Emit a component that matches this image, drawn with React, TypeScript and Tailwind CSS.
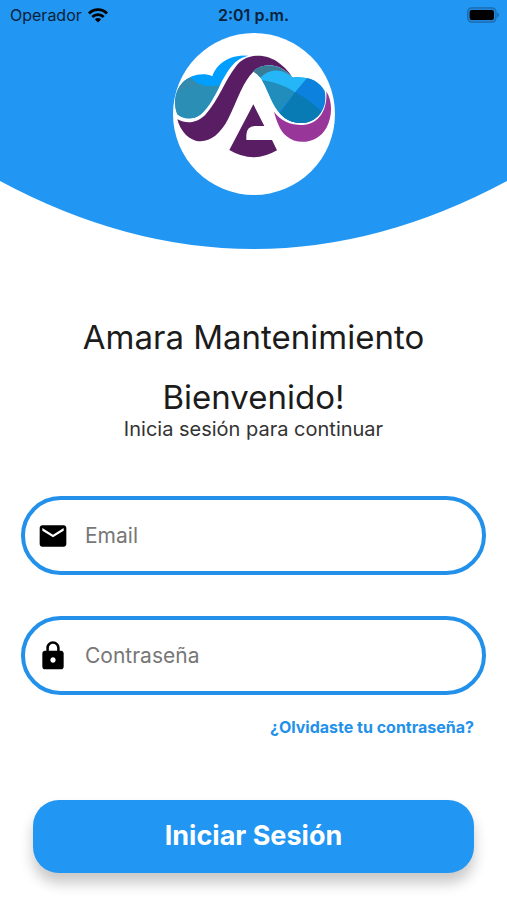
import type { ReactNode } from "react";

function StatusBar() {
  return (
    <div className="grid grid-cols-3 items-center px-2 pt-[3px] text-base leading-6 text-[#0a2238]">
      <div className="flex items-center gap-1.5 pl-0.5">
        <span>Operador</span>
        <svg viewBox="0 0 20 15" className="h-[15px] w-5" aria-hidden="true">
          <g fill="none" stroke="#000" strokeWidth="2.8">
            <path d="M1 5.4 C6 .4 14 .4 19 5.4" />
            <path d="M4.3 9 C7.5 5.8 12.5 5.8 15.7 9" />
          </g>
          <path d="M6.8 11.3 C8.7 9.6 11.3 9.6 13.2 11.3 L10 14.6Z" fill="#000" />
        </svg>
      </div>
      <time className="text-center font-semibold">2:01 p.m.</time>
      <svg viewBox="0 0 33 16" className="h-4 w-[33px] justify-self-end" aria-label="Batería" role="img">
        <rect x="1.6" y=".8" width="28.4" height="14.4" rx="4.2" fill="#2287db" stroke="#1c6bac" strokeWidth="1.2" />
        <rect x="3.6" y="3" width="24.4" height="10" rx="2.2" fill="#000" />
        <path d="M31.2 5.5 Q33 6 33 8 T31.2 10.5Z" fill="#1c6bac" />
      </svg>
    </div>
  );
}

function Logo() {
  return (
    <svg viewBox="40 24 486 486" className="size-[162px]" role="img" aria-label="Amara">
      <defs>
        <clipPath id="leftCloud">
          <path d="M53 268 C41 238 44 198 70 172 C92 150 130 141 158 154 C171 116 209 88 266 92 C223 101 205 137 187 168 C169 205 150 246 122 269 C98 286 70 283 53 268Z" />
        </clipPath>
        <clipPath id="rightCloud">
          <path d="M281 140 C304 116 354 108 398 157 C438 151 480 165 495 199 C505 244 477 293 425 294 C385 295 359 270 340 235 C323 202 309 152 281 140Z" />
        </clipPath>
      </defs>
      <circle cx="283" cy="267" r="243" fill="#fff" />
      <g clipPath="url(#leftCloud)">
        <rect x="40" y="85" width="230" height="205" fill="#009fff" />
        <path d="M40 160 L95 160 C115 180 138 187 180 181 L180 290 L40 290Z" fill="#2b8eb4" />
        <path d="M40 160 L95 160 Q105 176 123 183 Q80 183 40 208Z" fill="#348bad" />
      </g>
      <path
        d="M53 283 C84 300 116 292 139 267 C178 223 197 164 228 125 C259 83 319 84 358 114 C376 127 391 144 397 157 C358 108 304 116 281 140 C251 168 233 225 205 283 C178 334 145 355 108 347 C79 338 61 313 53 283Z"
        fill="#591d63"
      />
      <g clipPath="url(#rightCloud)">
        <rect x="275" y="105" width="235" height="195" fill="#25b6f8" />
        <path d="M275 105 H400 V158 C372 132 333 126 302 158 L281 145Z" fill="#397c96" />
        <path d="M300 165 C340 168 379 183 406 202 L372 250 L430 300 L320 300Z" fill="#218dbc" />
        <path d="M450 150 H510 V300 H330 L406 202Z" fill="#0c81de" />
        <path d="M406 202 C440 218 465 241 490 265 V300 H330 L372 250Z" fill="#087ab4" />
      </g>
      <path
        d="M343 260 C361 286 392 300 427 300 C478 299 504 255 500 199 C519 229 519 275 500 309 C473 356 413 362 380 333 C359 315 350 285 343 260Z"
        fill="#993699"
      />
      <path
        d="M281 238 L314 303 H285 Q261 304 260 330 V345 H337 L352 376 Q281 418 209 375Z"
        fill="#591d63"
      />
    </svg>
  );
}

function MailIcon() {
  return (
    <svg viewBox="0 0 24 24" className="size-8" fill="#000" aria-hidden="true">
      <path d="M20 4H4c-1.1 0-1.99.9-1.99 2L2 18c0 1.1.9 2 2 2h16c1.1 0 2-.9 2-2V6c0-1.1-.9-2-2-2zm0 4l-8 5-8-5V6l8 5 8-5v2z" />
    </svg>
  );
}

function LockIcon() {
  return (
    <svg viewBox="0 0 24 24" className="size-8" fill="#000" aria-hidden="true">
      <path d="M18 8h-1V6c0-2.76-2.24-5-5-5S7 3.24 7 6v2H6c-1.1 0-2 .9-2 2v10c0 1.1.9 2 2 2h12c1.1 0 2-.9 2-2V10c0-1.1-.9-2-2-2zm-6 9c-1.1 0-2-.9-2-2s.9-2 2-2 2 .9 2 2-.9 2-2 2zm3.1-9H8.9V6c0-1.71 1.39-3.1 3.1-3.1s3.1 1.39 3.1 3.1v2z" />
    </svg>
  );
}

function Field({ id, type, label, icon }: { id: string; type: string; label: string; icon: ReactNode }) {
  return (
    <div className="flex h-[79px] items-center gap-4 rounded-full border-4 border-[#2391ea] px-3">
      <label htmlFor={id} aria-label={label}>
        {icon}
      </label>
      <input
        id={id}
        type={type}
        placeholder={label}
        className="min-w-0 flex-1 bg-transparent text-[21px] text-gray-900 outline-none placeholder:text-[#777]"
      />
    </div>
  );
}

export default function App() {
  return (
    <div className="min-h-screen bg-white font-['Inter','Liberation_Sans',sans-serif]">
      <header className="relative isolate pb-[54px]">
        <svg
          viewBox="0 0 507 249"
          preserveAspectRatio="none"
          className="absolute inset-0 -z-10 h-full w-full"
          aria-hidden="true"
        >
          <path d="M0 0 H507 V181 Q253.500 317 0 181Z" fill="#2196f3" />
        </svg>
        <StatusBar />
        <div className="flex justify-center pt-1.5">
          <Logo />
        </div>
      </header>

      <main className="px-[21px] pb-7">
        <div className="pt-[68px] text-center text-[#1c1c1c]">
          <h1 className="text-[33px] leading-10">Amara Mantenimiento</h1>
          <h2 className="pt-5 text-[33px] leading-10">Bienvenido!</h2>
          <p className="text-xl leading-6 text-[#333]">Inicia sesión para continuar</p>
        </div>

        <form className="flex flex-col pt-[55px]" onSubmit={(e) => e.preventDefault()}>
          <div className="flex flex-col gap-[41px]">
            <Field id="email" type="email" label="Email" icon={<MailIcon />} />
            <Field id="password" type="password" label="Contraseña" icon={<LockIcon />} />
          </div>
          <a href="#recuperar" className="mt-5 mr-3 self-end text-base leading-6 font-bold text-[#2391ea]">
            ¿Olvidaste tu contraseña?
          </a>
          <div className="px-3 pt-[61px]">
            <button
              type="submit"
              className="h-[73px] w-full rounded-[26px] bg-[#2196f3] text-[27px] font-bold text-white shadow-[0_10px_14px_rgba(0,0,0,0.22)]"
            >
              Iniciar Sesión
            </button>
          </div>
        </form>
      </main>
    </div>
  );
}
